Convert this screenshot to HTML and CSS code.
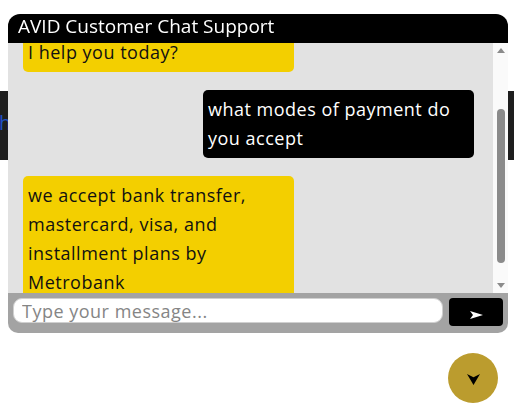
FILE: index.html
```html
<!DOCTYPE html>
<html>
<head>
<meta charset="utf-8">
<link rel="stylesheet" href="styles.css">
</head>
<body>
<nav class="topbar"><a class="nav-link">h</a></nav>

<div class="chat">
  <div class="chat-header">AVID Customer Chat Support</div>
  <div class="chat-body">
    <div class="chat-messages" id="msgs">
      <div class="msg bot">Hello! Welcome to AVID<br>Customer Support. How can<br>I help you today?</div>
      <div class="msg user">what modes of payment do you accept</div>
      <div class="msg bot">we accept bank transfer, mastercard, visa, and installment plans by Metrobank</div>
    </div>
    <div class="scrollbar">
      <div class="sb-arrow sb-up"></div>
      <div class="sb-track"><div class="sb-thumb"></div></div>
      <div class="sb-arrow sb-down"></div>
    </div>
  </div>
  <div class="chat-input">
    <input class="text-input" type="text" placeholder="Type your message...">
    <button class="send" aria-label="Send">
      <svg class="send-icon" width="13" height="8" viewBox="0 0 13 8"><path d="M0 0 L13 4 L0 8 L3 4 Z" fill="#ffffff"/></svg>
    </button>
  </div>
</div>

<button class="toggle" aria-label="Toggle chat">
  <svg class="toggle-icon" width="13" height="11" viewBox="0 0 13 11"><path d="M0 0 L6.5 3.2 L13 0 L6.5 11 Z" fill="#000000"/></svg>
</button>

<script src="script.js"></script>
</body>
</html>
```

FILE: styles.css
```css
html, body {
  margin: 0;
  padding: 0;
  background: #ffffff;
  font-family: "Open Sans", "Noto Sans", sans-serif;
}

.topbar {
  margin-top: 91px;
  height: 69px;
  background: #1e1e1e;
  display: flex;
  align-items: center;
}

.nav-link {
  color: #1f4fc4;
  font-size: 20px;
  margin-left: -1px;
  margin-top: -6px;
}

.chat {
  position: fixed;
  left: 8px;
  top: 14px;
  width: 500px;
  border-radius: 12px 12px 10px 10px;
  overflow: hidden;
  display: flex;
  flex-direction: column;
}

.chat-header {
  background: #000000;
  color: #ffffff;
  height: 29px;
  line-height: 24px;
  font-size: 19px;
  padding-left: 10px;
  box-sizing: border-box;
}

.chat-body {
  display: flex;
  height: 250px;
}

.chat-messages {
  flex: 1;
  background: #e2e2e2;
  overflow-y: auto;
  scrollbar-width: none;
  display: flex;
  flex-direction: column;
  gap: 18px;
  padding: 15px 19px 15px 15px;
  box-sizing: border-box;
}

.chat-messages::-webkit-scrollbar {
  display: none;
}

.scrollbar {
  width: 15px;
  background: #fafafa;
  display: flex;
  flex-direction: column;
}

.sb-arrow {
  height: 15px;
  display: flex;
  align-items: center;
  justify-content: center;
}

.sb-arrow::before {
  content: "";
  width: 0;
  height: 0;
  border-left: 4px solid transparent;
  border-right: 4px solid transparent;
}

.sb-up::before {
  border-bottom: 5px solid #8b8b8b;
}

.sb-down::before {
  border-top: 5px solid #8b8b8b;
}

.sb-track {
  flex: 1;
  display: flex;
  justify-content: center;
}

.sb-thumb {
  width: 8px;
  height: 154px;
  margin-top: 51px;
  margin-left: 1px;
  border-radius: 4px;
  background: #8b8b8b;
}

.msg {
  box-sizing: border-box;
  width: 271px;
  padding: 5px;
  border-radius: 5px;
  font-size: 18px;
  letter-spacing: 0.5px;
  line-height: 29px;
  flex-shrink: 0;
}

.bot {
  align-self: flex-start;
  background: #f3cf00;
  color: #111111;
}

.user {
  align-self: flex-end;
  background: #000000;
  color: #ffffff;
}

.chat-input {
  background: #a3a3a3;
  display: flex;
  align-items: flex-start;
  gap: 6px;
  padding: 5px 5px 7px 5px;
}

.text-input {
  flex: 1;
  height: 25px;
  box-sizing: border-box;
  border: 1px solid #d0d0d0;
  border-radius: 9px;
  padding: 0 8px;
  font-family: inherit;
  font-size: 18px;
  letter-spacing: 0.5px;
  color: #333;
  outline: none;
}

.text-input::placeholder {
  color: #858585;
}

.send {
  width: 54px;
  height: 28px;
  background: #000000;
  border: none;
  border-radius: 4px;
  padding: 6px 0 0 0;
  display: flex;
  align-items: center;
  justify-content: center;
}

.send-icon {
  display: block;
}

.toggle {
  position: fixed;
  right: 16px;
  bottom: 5px;
  width: 50px;
  height: 50px;
  border-radius: 50%;
  border: none;
  background: #bb9c2e;
  display: flex;
  align-items: center;
  justify-content: center;
  padding: 2px 0 0 0;
}

.toggle-icon {
  display: block;
}
```

FILE: script.js
```js
document.getElementById('msgs').scrollTop = 83;
```
